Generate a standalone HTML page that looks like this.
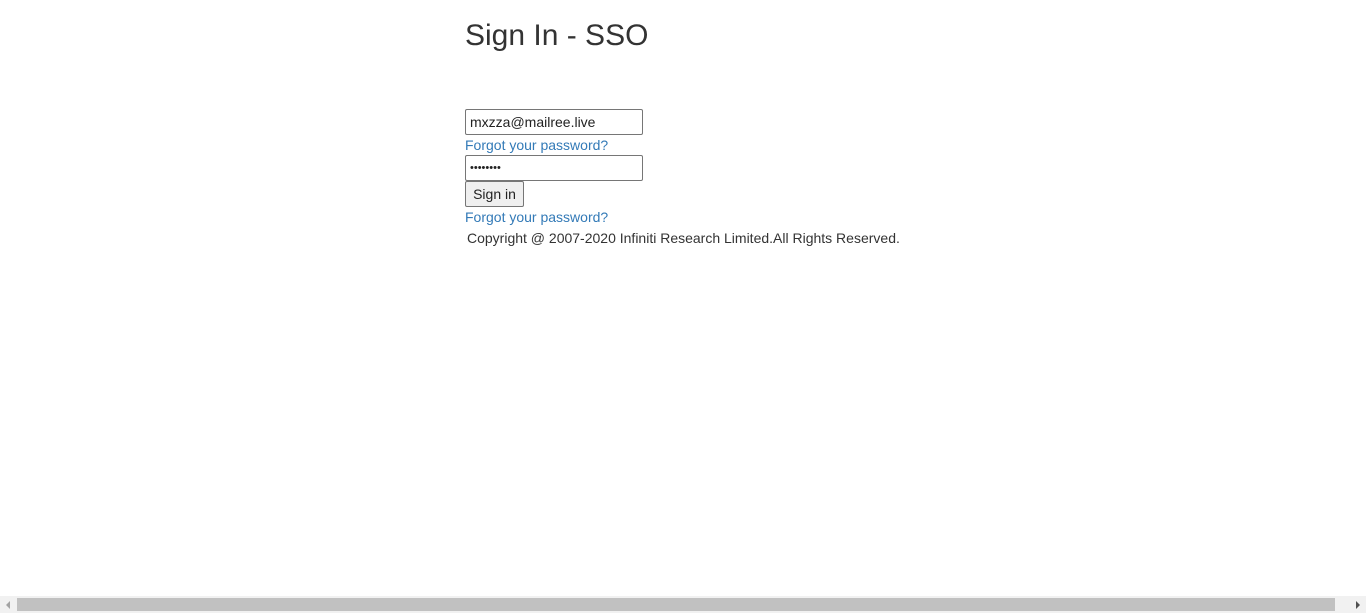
<!DOCTYPE html>
<html><head><style>
body{margin:0;width:1366px;height:613px;overflow:hidden;background:#fff;font-family:"Liberation Sans",Arial,sans-serif;font-size:14px;color:#333;position:relative}
.a{position:absolute;white-space:nowrap}
h1{position:absolute;left:465px;top:17px;margin:0;font-size:30px;font-weight:500;line-height:38px;color:#333}
.in{position:absolute;left:465px;width:176px;height:24px;border:1px solid #767676;border-radius:2px;font-size:14px;line-height:24px;padding-left:4px;box-sizing:border-box;width:178px;height:26px;color:#222}
a{color:#337ab7;text-decoration:none}
.btn{position:absolute;left:465px;top:181px;width:59px;height:26px;box-sizing:border-box;border:1px solid #767676;border-radius:2px;background:#efefef;text-align:center;line-height:24px;color:#222}
.sb{position:absolute;left:0;top:596px;width:1366px;height:17px;background:#f1f1f1}
.th{position:absolute;left:17px;top:598px;width:1318px;height:13px;background:#c1c1c1}
</style></head><body>
<h1>Sign In - SSO</h1>
<div class="in" style="top:109px">mxzza@mailree.live</div>
<a class="a" style="left:465px;top:137px" href="#">Forgot your password?</a>
<div class="in" style="top:155px;font-size:11px;letter-spacing:0">••••••••</div>
<div class="btn">Sign in</div>
<a class="a" style="left:465px;top:209px" href="#">Forgot your password?</a>
<div class="a" style="left:467px;top:230px">Copyright @ 2007-2020 Infiniti Research Limited.All Rights Reserved.</div>
<div class="sb"></div><div class="th"></div>
<svg class="a" style="left:4px;top:600px" width="8" height="10"><path d="M6 1L2 5L6 9Z" fill="#a3a3a3"/></svg>
<svg class="a" style="left:1354px;top:600px" width="8" height="10"><path d="M2 1L6 5L2 9Z" fill="#505050"/></svg>
</body></html>
